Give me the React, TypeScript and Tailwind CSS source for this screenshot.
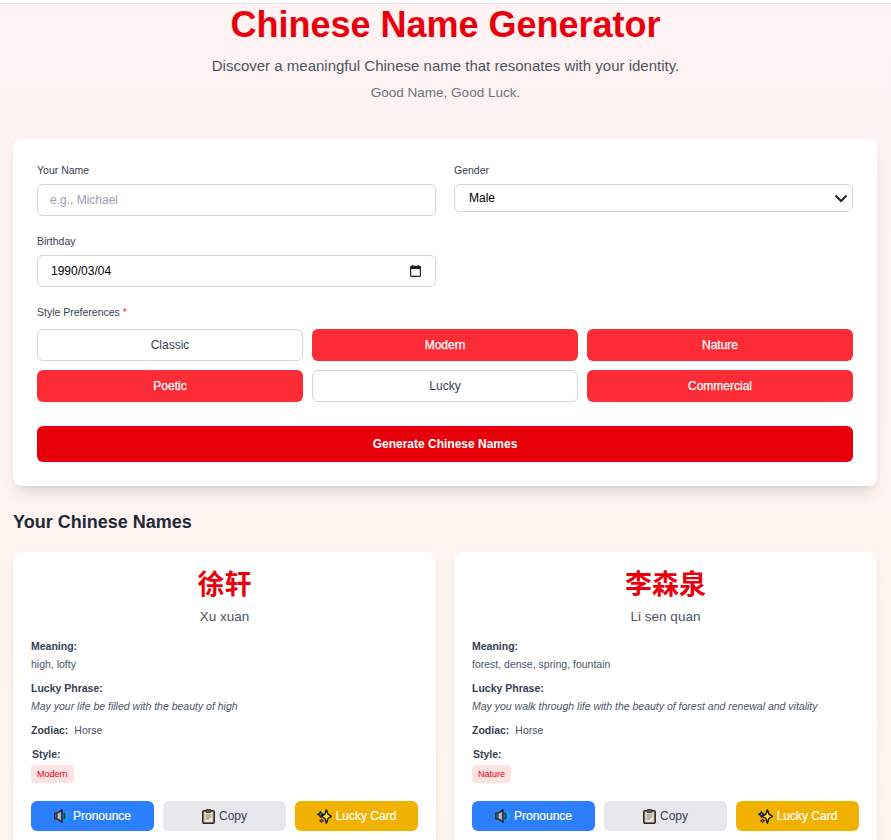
import React from "react";

const font = { fontFamily: '"Liberation Sans", "Noto Sans CJK SC", Arial, sans-serif' };

function SpeakerIcon() {
  return (
    <svg width="15" height="14" viewBox="0 0 15 14" className="shrink-0">
      <path d="M0.8 4.2h2.6L8 0.8v12.4L3.4 9.8H0.8z" fill="#9a9fa3" stroke="#16181b" strokeWidth="1.3" strokeLinejoin="round" />
      <rect x="1.6" y="5" width="2" height="4" fill="#3f4448" />
      <path d="M5 4.2v5.6" stroke="#dfe2e4" strokeWidth="1.2" />
      <path d="M9.8 3.8c1.2 2 1.2 4.4 0 6.4" fill="none" stroke="#0d3f4a" strokeWidth="1.6" />
      <path d="M12 2c2.2 3 2.2 7 0 10" fill="none" stroke="#0fb4c0" strokeWidth="1.6" />
    </svg>
  );
}

function ClipboardIcon() {
  return (
    <svg width="13" height="15" viewBox="0 0 13 15" className="shrink-0">
      <rect x="0.7" y="1.7" width="11.6" height="12.6" rx="1.2" fill="#a88a68" stroke="#2b241d" strokeWidth="1.3" />
      <rect x="2.4" y="3.2" width="8.2" height="9.6" fill="#efece4" />
      <rect x="4" y="0.6" width="5" height="3" rx="0.6" fill="#5d6266" stroke="#2b241d" strokeWidth="0.9" />
      <path d="M3.6 6h5.8M3.6 8h5.8M3.6 10h3.6" stroke="#77787a" strokeWidth="1" />
    </svg>
  );
}

function SparkleIcon() {
  return (
    <svg width="15" height="15" viewBox="0 0 15 15" className="shrink-0">
      <path d="M9.4 0.8l1.5 4.3 3.6 2.2-3.6 2.2-1.5 4.7-1.5-4.7-3.6-2.2 3.6-2.2z" fill="#ffe41c" stroke="#17150a" strokeWidth="1.4" strokeLinejoin="round" />
      <path d="M3.4 2.4l.9 2 2 .9-2 .9-.9 2-.9-2-2-.9 2-.9z" fill="#1798cc" stroke="#0c1c24" strokeWidth="1.1" strokeLinejoin="round" />
      <path d="M4.6 9.8l.6 1.4 1.4.6-1.4.6-.6 1.4-.6-1.4-1.4-.6 1.4-.6z" fill="#e35aa8" stroke="#241019" strokeWidth="0.9" strokeLinejoin="round" />
    </svg>
  );
}

function Label({ children }: { children: React.ReactNode }) {
  return <label className="mb-1.5 block text-[10.5px] leading-[15px] text-gray-700">{children}</label>;
}

const styles: [string, boolean][] = [
  ["Classic", false],
  ["Modern", true],
  ["Nature", true],
  ["Poetic", true],
  ["Lucky", false],
  ["Commercial", true],
];

function NameCard(props: { zh: string; pinyin: string; meaning: string; phrase: string; tag: string }) {
  return (
    <div className="rounded-lg bg-white p-[18px] shadow-md">
      <div className="text-center text-[27px] leading-[30px] font-bold text-red-600">{props.zh}</div>
      <div className="mt-1.5 mb-3 text-center text-[13.5px] leading-[21px] text-gray-600">{props.pinyin}</div>
      <div className="flex flex-col gap-[9px] text-[10.5px] leading-[15px]">
        <div>
          <div className="mb-[3px] font-bold text-gray-700">Meaning:</div>
          <div className="text-gray-600">{props.meaning}</div>
        </div>
        <div>
          <div className="mb-[3px] font-bold text-gray-700">Lucky Phrase:</div>
          <div className="text-gray-600 italic">{props.phrase}</div>
        </div>
        <div className="text-gray-600">
          <span className="mr-1.5 font-bold text-gray-700">Zodiac:</span>Horse
        </div>
        <div>
          <div className="mb-[3px] ml-px font-bold text-gray-700">Style:</div>
          <span className="block w-fit rounded bg-red-100 px-1.5 py-[3px] text-[9px] leading-3 text-red-600">{props.tag}</span>
        </div>
      </div>
      <div className="mt-[18px] grid grid-cols-3 gap-[9px] text-xs">
        <button className="flex h-[30px] items-center justify-center gap-1 rounded-md bg-blue-500 text-white [-webkit-text-stroke:0.2px_white]">
          <SpeakerIcon />
          Pronounce
        </button>
        <button className="flex h-[30px] items-center justify-center gap-1 rounded-md bg-gray-200 text-gray-700">
          <ClipboardIcon />
          Copy
        </button>
        <button className="flex h-[30px] items-center justify-center gap-1 rounded-md bg-yellow-500 text-white [-webkit-text-stroke:0.2px_white]">
          <SparkleIcon />
          Lucky Card
        </button>
      </div>
    </div>
  );
}

export default function App() {
  return (
    <div className="h-[840px] overflow-hidden bg-gradient-to-b from-red-50 to-[#fff5ef]" style={font}>
      <div className="h-1 border-b border-gray-200 bg-white" />
      <div className="mt-[3px] text-center">
        <h1 className="text-[36px] leading-9 font-bold text-red-600">Chinese Name Generator</h1>
        <p className="mt-3 text-[15px] leading-[21px] text-gray-600">
          Discover a meaningful Chinese name that resonates with your identity.
        </p>
        <p className="mt-1.5 text-[13.5px] leading-[21px] text-gray-500">Good Name, Good Luck.</p>
      </div>

      <div className="mt-9 ml-[13px] w-[864px]">
        <form className="rounded-lg bg-white p-6 shadow-lg">
          <div className="grid grid-cols-2 items-start gap-x-[18px] gap-y-[18px]">
            <div>
              <Label>Your Name</Label>
              <input
                placeholder="e.g., Michael"
                className="h-8 w-full rounded-md border border-gray-300 px-3 text-xs text-gray-900 placeholder:text-gray-400"
              />
            </div>
            <div>
              <Label>Gender</Label>
              <div className="relative">
                <select
                  defaultValue="Male"
                  className="h-7 w-full appearance-none rounded-md border border-gray-300 bg-white pl-3.5 text-xs text-black"
                >
                  <option>Male</option>
                  <option>Female</option>
                </select>
                <svg
                  width="14"
                  height="9"
                  viewBox="0 0 14 9"
                  className="pointer-events-none absolute top-[10px] right-[5px]"
                >
                  <path d="M1.5 1.5L7 7l5.5-5.5" fill="none" stroke="#1f2328" strokeWidth="2" />
                </svg>
              </div>
            </div>
            <div>
              <Label>Birthday</Label>
              <div className="relative">
                <input
                  type="text"
                  readOnly
                  value="1990/03/04"
                  className="h-8 w-full rounded-md border border-gray-300 pl-[13px] text-xs text-black"
                />
                <svg width="11" height="12" viewBox="0 0 11 12" className="absolute top-[10px] right-[15px]">
                  <path d="M2.5 0v1.5M8.5 0v1.5" stroke="#222" strokeWidth="1.2" />
                  <rect x="0.6" y="1.4" width="9.8" height="10" rx="1" fill="none" stroke="#222" strokeWidth="1.2" />
                  <rect x="0.6" y="1.4" width="9.8" height="2.6" fill="#222" />
                </svg>
              </div>
            </div>
          </div>

          <div className="mt-[18px]">
            <label className="mb-[9px] block text-[10.5px] leading-[15px] text-gray-700">
              Style Preferences <span className="text-red-500">*</span>
            </label>
            <div className="grid grid-cols-3 gap-[9px]">
              {styles.map(([name, active]) =>
                active ? (
                  <button
                    key={name}
                    type="button"
                    className="h-8 rounded-md bg-red-500 text-xs text-white [-webkit-text-stroke:0.25px_white]"
                  >
                    {name}
                  </button>
                ) : (
                  <button
                    key={name}
                    type="button"
                    className="h-8 rounded-md border border-gray-300 bg-white text-xs text-gray-700"
                  >
                    {name}
                  </button>
                )
              )}
            </div>
          </div>

          <button type="button" className="mt-6 h-9 w-full rounded-md bg-red-600 text-xs font-bold text-white">
            Generate Chinese Names
          </button>
        </form>

        <h2 className="mt-6 mb-[18px] text-[18px] leading-6 font-bold text-gray-800">Your Chinese Names</h2>

        <div className="grid grid-cols-2 gap-[18px]">
          <NameCard
            zh="徐轩"
            pinyin="Xu xuan"
            meaning="high, lofty"
            phrase="May your life be filled with the beauty of high"
            tag="Modern"
          />
          <NameCard
            zh="李森泉"
            pinyin="Li sen quan"
            meaning="forest, dense, spring, fountain"
            phrase="May you walk through life with the beauty of forest and renewal and vitality"
            tag="Nature"
          />
        </div>
      </div>
    </div>
  );
}
